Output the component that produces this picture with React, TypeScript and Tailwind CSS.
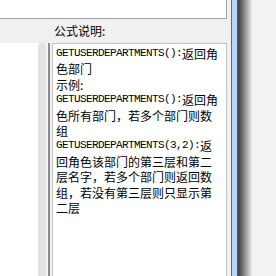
const cjk = "font-['Noto_Sans_CJK_SC','Noto_Sans',sans-serif]";
const mono = "font-['Liberation_Mono',monospace] text-[11px] leading-[15px] tracking-[-0.6px] align-top";

function Code({ children }: { children: React.ReactNode }) {
  return <span className={mono}>{children}</span>;
}

export default function App() {
  const lines: React.ReactNode[] = [
    <>
      <Code>GETUSERDEPARTMENTS():</Code>返回角
    </>,
    "色部门",
    "示例:",
    <>
      <Code>GETUSERDEPARTMENTS():</Code>返回角
    </>,
    "色所有部门，若多个部门则数",
    "组",
    <>
      <Code>GETUSERDEPARTMENTS(3,2):</Code>返
    </>,
    "回角色该部门的第三层和第二",
    "层名字，若多个部门则返回数",
    "组，若没有第三层则只显示第",
    "二层",
  ];

  return (
    <div className={`w-[276px] h-[276px] flex bg-[#f2f2f2] overflow-hidden text-black ${cjk}`}>
      {/* main form area */}
      <div className="w-[231px] h-full flex flex-col bg-[#f0f0f0]">
        <div className="h-[19px] w-[227px] bg-white border-b border-r border-[#a0a0a0]" />
        <div className="h-[24px] pl-[54px] pt-[4px] text-[12px] leading-[15px]">公式说明:</div>
        <div className="flex flex-1">
          {/* left list + scrollbar */}
          <div className="w-[38px] bg-white" />
          <div className="w-[8px] bg-[#e3e3e3] rounded-t-[3px]" />
          <div className="w-[2px] bg-[#f4f4f4]" />
          <div className="w-[2px] bg-[#8a8a8a]" />
          <div className="w-[2px] bg-[#f0f0f0]" />
          {/* description box */}
          <div className="w-[175px] bg-white border border-b-0 border-[#c4c4c4] pl-[3px] pt-[2px] text-[12px]">
            {lines.map((l, i) => (
              <div key={i} className="whitespace-nowrap h-[15.4px] leading-[15px] overflow-hidden">
                {l}
              </div>
            ))}
          </div>
        </div>
      </div>
      {/* window edge */}
      <div className="w-[1px] bg-[#6b6b6b]" />
      <div className="w-[5px] bg-[#b6d4f4]" />
      <div className="w-[1px] bg-[#5a5a5a]" />
      <div className="w-[14px] bg-gradient-to-r from-[#3c3c3c] to-[#eeeeee]" />
    </div>
  );
}
